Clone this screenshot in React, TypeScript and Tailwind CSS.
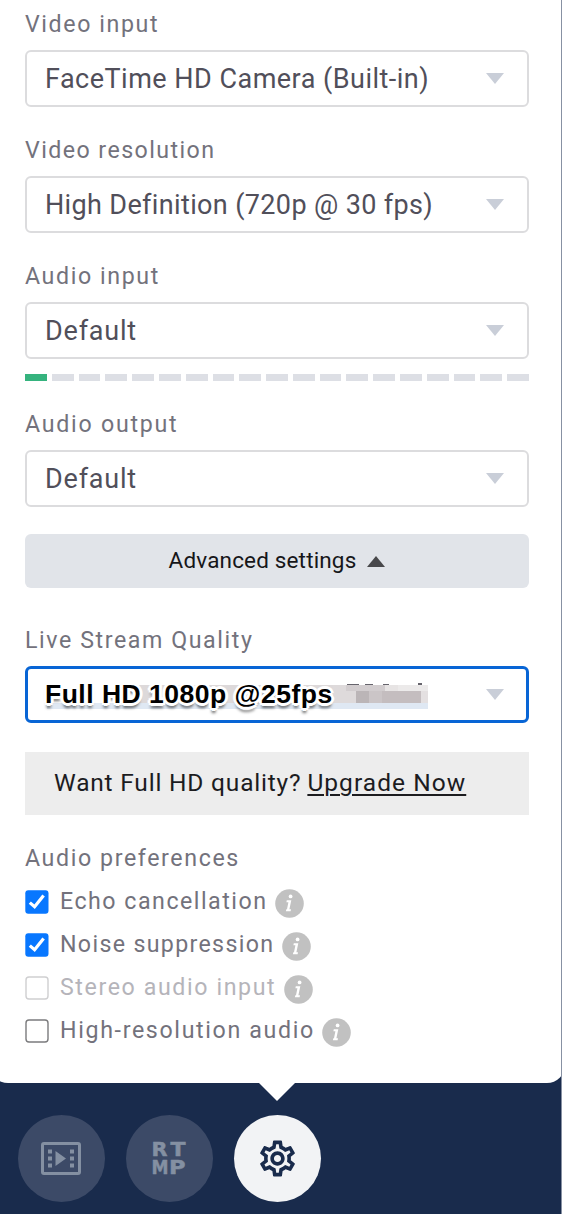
import type { ReactNode } from "react";
import { MdOutlineSettings } from "react-icons/md";

function Label({ children, spacing }: { children: ReactNode; spacing: string }) {
  return (
    <div className={`h-[30px] whitespace-nowrap text-[23.2px] leading-[30px] text-[#73727c] ${spacing}`}>
      {children}
    </div>
  );
}

function Caret() {
  return (
    <svg className="h-[11px] w-[18px] shrink-0" viewBox="0 0 18 11" fill="#c9ced8">
      <path d="M0 0H18L9 11Z" />
    </svg>
  );
}

function Select({ children, spacing }: { children: ReactNode; spacing: string }) {
  return (
    <div className="mt-[11px] flex h-[57px] items-center justify-between rounded-md border-2 border-[#dcdcde] pr-[23px] pl-[18px]">
      <span className={`whitespace-nowrap text-[27px] leading-[30px] text-[#514f5a] ${spacing}`}>{children}</span>
      <Caret />
    </div>
  );
}

function Preference({ label, spacing, checked, disabled }: { label: string; spacing: string; checked?: boolean; disabled?: boolean }) {
  return (
    <div className="flex h-[43.2px] items-center">
      <svg className="mt-[2px] h-6 w-6 shrink-0" viewBox="0 0 24 24">
        {checked ? (
          <>
            <rect x="0.3" y="0.3" width="23.2" height="23.4" rx="3" fill="#0877ff" />
            <path d="M4.8 12.6 9.6 16.8 18.6 5.4" fill="none" stroke="#fff" strokeWidth="3.2" />
          </>
        ) : (
          <rect x="1" y="1" width="22" height="22" rx="3" fill="#fff" stroke={disabled ? "#cfcfd1" : "#7b7b7d"} strokeWidth="1.4" />
        )}
      </svg>
      <span className={`ml-[11px] whitespace-nowrap text-[23.2px] leading-[30px] ${spacing} ${disabled ? "text-[#b5b4ba]" : "text-[#73727c]"}`}>
        {label}
      </span>
      <svg className="mt-[5px] ml-[7.5px] h-[29px] w-[29px] shrink-0" viewBox="0 0 29 29">
        <circle cx="14.5" cy="14.5" r="14.3" fill="#c1c1c1" />
        <g fill="#fff">
          <circle cx="15.6" cy="7.4" r="1.9" />
          <path d="M11.8 11.3H16.3L14.4 20.3H16L15.6 22.3H10.9L11.3 20.3H12L13.4 13.3H11.4Z" />
        </g>
      </svg>
    </div>
  );
}

export default function App() {
  return (
    <main className="h-[1214px] w-[562px] overflow-hidden border-r border-[#8791a3] bg-[#192b4c] font-['Roboto',sans-serif]">
      <section className="-ml-[10px] h-[1083px] w-[575px] rounded-b-[18px] bg-white pt-[9px] pl-[35px]">
        <div className="w-[504px]">
          <Label spacing="tracking-[1.6px]">Video input</Label>
          <Select spacing="tracking-[0.48px]">FaceTime HD Camera (Built-in)</Select>
          <div className="h-[28px]" />
          <Label spacing="tracking-[1.43px]">Video resolution</Label>
          <Select spacing="tracking-[0.36px]">High Definition (720p @ 30 fps)</Select>
          <div className="h-[28px]" />
          <Label spacing="tracking-[1.6px]">Audio input</Label>
          <Select spacing="tracking-[0.8px]">Default</Select>
          <div className="mt-[15px] grid h-[7px] grid-cols-19 gap-[5px]">
            {Array.from({ length: 19 }, (_, i) => (
              <div key={i} className={i === 0 ? "bg-[#35b37e]" : "bg-[#dddfe5]"} />
            ))}
          </div>
          <div className="h-[28px]" />
          <Label spacing="tracking-[1.75px]">Audio output</Label>
          <Select spacing="tracking-[0.8px]">Default</Select>
          <button className="mt-[27px] flex h-[54px] w-full items-center justify-center gap-[11px] rounded-md bg-[#e1e4e9] text-[22.5px] text-[#161619]">
            <span className="whitespace-nowrap tracking-[0.16px]">Advanced settings</span>
            <svg className="h-[11px] w-[18px]" viewBox="0 0 18 11" fill="#48484b">
              <path d="M0 11H18L9 0Z" />
            </svg>
          </button>
          <div className="h-[37px]" />
          <Label spacing="tracking-[1.58px]">Live Stream Quality</Label>
          <div className="relative mt-[11px] flex h-[57px] items-center justify-between rounded-md border-[3.5px] border-[#0865d5] pr-[22px] pl-[17px]">
            <svg className="absolute top-[14px] left-[15px] h-[30px] w-[390px]" viewBox="0 0 390 30" shapeRendering="crispEdges">
              <rect x="4" y="20" width="381" height="6" fill="#dfe8f3" />
              <rect x="90" y="2" width="210" height="18" fill="#ddd9da" />
              <path d="M304 1h12v2h-12zM322 1h8v2h-8zM340 1h6v2h-6zM375 0h4v3h-4z" fill="#66646c" />
              <rect x="290" y="2" width="95" height="18" fill="#dedadb" />
              <rect x="303" y="2" width="39" height="6" fill="#d2cdcf" />
              <rect x="342" y="2" width="13" height="6" fill="#e7e4e4" />
              <rect x="355" y="2" width="30" height="6" fill="#eceaea" />
              <rect x="313" y="8" width="65" height="12" fill="#c4bdbf" />
              <rect x="313" y="8" width="13" height="12" fill="#bbb5b7" />
              <rect x="326" y="8" width="13" height="12" fill="#cbc5c7" />
              <rect x="378" y="8" width="7" height="12" fill="#e4e0e1" />
            </svg>
            <span className="relative -top-px whitespace-nowrap font-['Liberation_Sans',sans-serif] text-[26.5px] leading-[30px] font-bold tracking-[0.5px] text-black [text-shadow:3px_0_0_#fff,-3px_0_0_#fff,0_3px_0_#fff,0_-3px_0_#fff,2px_2px_0_#fff,-2px_2px_0_#fff,2px_-2px_0_#fff,-2px_-2px_0_#fff,0_5px_3px_rgba(0,0,0,0.6)]">
              Full HD 1080p @25fps
            </span>
            <Caret />
          </div>
          <div className="mt-[29px] flex h-[63px] items-center bg-[#ededed] pl-[29px] text-[24.5px] whitespace-nowrap text-[#1c1c1f]">
            <span className="tracking-[0.8px]">Want Full HD quality?</span>
            <a className="ml-[6px] tracking-[1.05px] underline decoration-2 underline-offset-[3px]">Upgrade Now</a>
          </div>
          <div className="h-[28px]" />
          <Label spacing="tracking-[1.6px]">Audio preferences</Label>
          <div className="mt-[6px]">
            <Preference label="Echo cancellation" spacing="tracking-[1.5px]" checked />
            <Preference label="Noise suppression" spacing="tracking-[1.33px]" checked />
            <Preference label="Stereo audio input" spacing="tracking-[1.6px]" disabled />
            <Preference label="High-resolution audio" spacing="tracking-[1.65px]" />
          </div>
        </div>
      </section>
      <svg className="ml-[259px] h-[18px] w-[36px]" viewBox="0 0 36 18" fill="#fff">
        <path d="M0 0H36L18 18Z" />
      </svg>
      <nav className="mt-[14px] flex gap-[21.4px] pl-[18px]">
        <button className="flex h-[86.6px] w-[86.6px] items-center justify-center rounded-full bg-[#3c4a67]">
          <svg className="h-[33px] w-[40px]" viewBox="0 0 40 33" fill="#8490a2">
            <rect x="1.5" y="1.5" width="37" height="30" rx="1.5" fill="none" stroke="#8490a2" strokeWidth="3" />
            <path d="M14.5 9V24L25 16.5ZM7 7.5h4v4H7zM7 14.5h4v4H7zM7 21.5h4v4H7zM29 7.5h4v4h-4zM29 14.5h4v4h-4zM29 21.5h4v4h-4z" />
          </svg>
        </button>
        <button className="flex h-[86.6px] w-[86.6px] items-center justify-center rounded-full bg-[#3c4a67]">
          <svg className="h-[54px] w-[54px] font-['DejaVu_Sans',sans-serif] text-[19px] font-bold" viewBox="0 0 54 54" fill="#8490a2" stroke="#8490a2" strokeWidth="0.5">
            <text x="9.5" y="25" textLength="16" lengthAdjust="spacingAndGlyphs">R</text>
            <text x="28.5" y="25" textLength="15" lengthAdjust="spacingAndGlyphs">T</text>
            <text x="9.5" y="43.3" textLength="17" lengthAdjust="spacingAndGlyphs">M</text>
            <text x="27" y="43.3" textLength="16.5" lengthAdjust="spacingAndGlyphs">P</text>
          </svg>
        </button>
        <button className="flex h-[86.6px] w-[86.6px] items-center justify-center rounded-full bg-[#f2f3f5]">
          <MdOutlineSettings className="h-[43px] w-[43px] text-[#192b4c]" />
        </button>
      </nav>
    </main>
  );
}
